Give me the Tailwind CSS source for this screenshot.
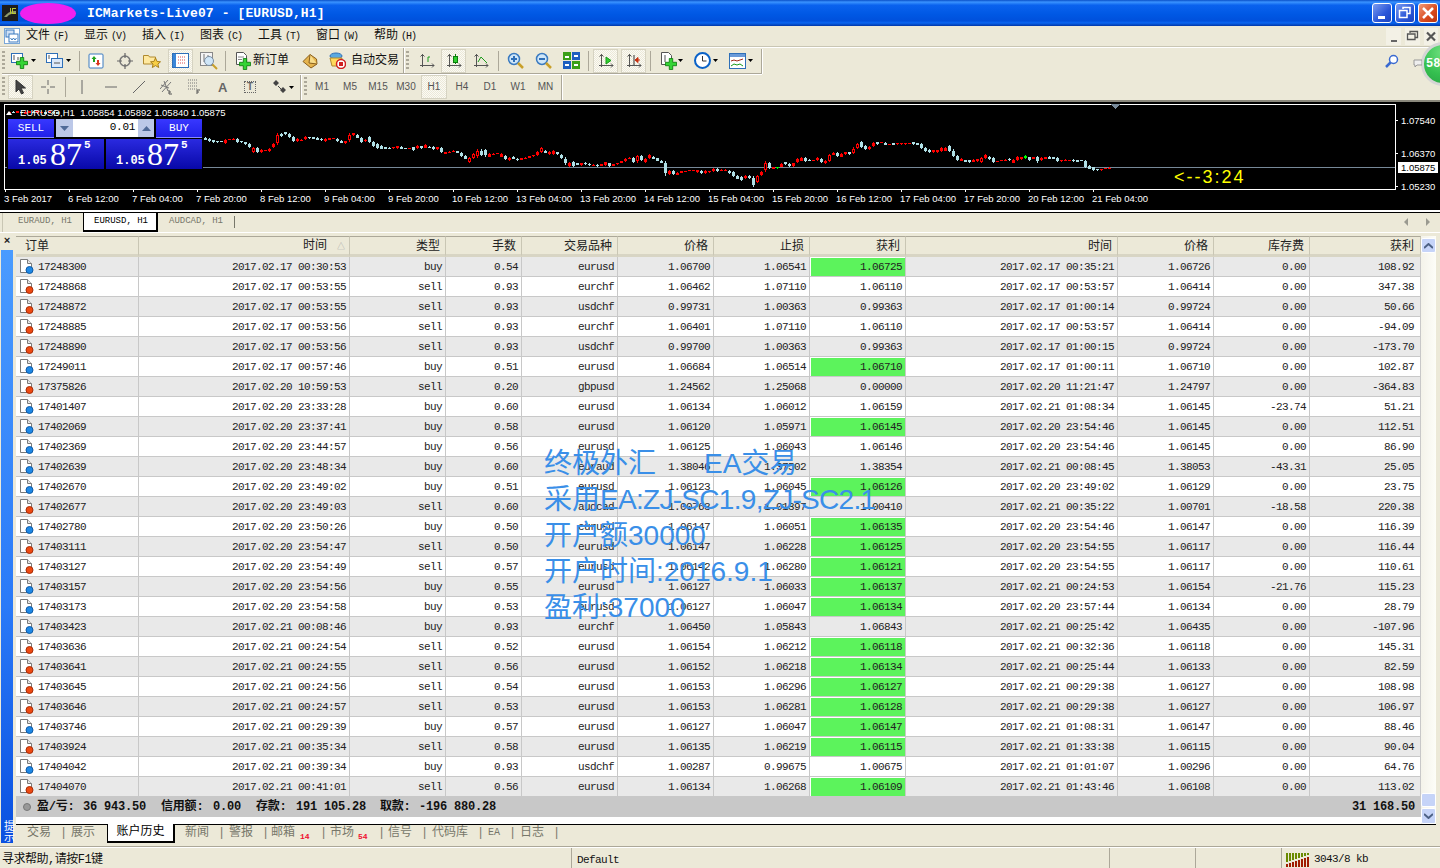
<!DOCTYPE html>
<html><head><meta charset="utf-8"><title>MT4</title>
<script src="https://cdn.jsdelivr.net/npm/@tailwindcss/browser@4"></script></head>
<body class="m-0 overflow-hidden">
<svg width="0" height="0" class="absolute"><defs>
<symbol id="b" viewBox="0 0 15 16"><path d="M1.5 1.5h7l4 4v9h-11z" fill="#fff" stroke="#7a7a7a"/><path d="M8.5 1.5v4h4" fill="#e8e8e8" stroke="#7a7a7a"/><circle cx="10.5" cy="12" r="3.5" fill="#1e88e5" stroke="#0d5aa7"/></symbol>
<symbol id="s" viewBox="0 0 15 16"><path d="M1.5 1.5h7l4 4v9h-11z" fill="#fff" stroke="#7a7a7a"/><path d="M8.5 1.5v4h4" fill="#e8e8e8" stroke="#7a7a7a"/><circle cx="10.5" cy="12" r="3.5" fill="#ee4a12" stroke="#a82c06"/></symbol>
<symbol id="plus" viewBox="0 0 14 14"><path d="M5 .5h4v4.500h4.500v4H9v4.500H5V9H.5V5H5z" fill="#35d435" stroke="#0d7d0d"/></symbol>
<symbol id="ax" viewBox="0 0 16 16"><path d="M3.500 1v13M1 12.500h14M1.500 3.500l2-2 2 2M13 10.500l2 2-2 2" fill="none" stroke="#555"/></symbol>
</defs></svg>

<div class="relative w-[1440px] h-[868px] overflow-hidden bg-[#ece9d8] text-black flex flex-col font-['Liberation_Mono','Noto_Sans_CJK_SC',monospace]">

<!-- title bar -->
<div class="h-[26px] shrink-0 flex items-center bg-[linear-gradient(180deg,#0a50c8_0%,#3a93ff_8%,#0a62ee_20%,#0058e4_55%,#0050dc_80%,#0a66f0_88%,#0036a8_100%)]">
  <svg width="16" height="16" viewBox="0 0 16 16" class="ml-[2px]"><rect width="16" height="16" fill="#1c1c1c"/><path d="M2 12q5-7 12-6v3q-6-1-9 3z" fill="#8f9a6a"/><path d="M8 3h1v6H8zM10 3h4v1h-3v4h3v1h-4z" fill="#b8c830"/></svg>
  <div class="ml-[2px] w-[56px] h-[21px] rounded-[50%] bg-[#f020ee]"></div>
  <div class="ml-[11px] text-white font-bold text-[13px] tracking-[0.12px] leading-none">ICMarkets-Live07 - [EURUSD,H1]</div>
  <div class="ml-auto flex gap-[3px] mr-[2px]">
    <div class="w-[20px] h-[20px] rounded-[3px] border border-white bg-[linear-gradient(135deg,#7c9cf0,#2a56d8_60%,#1c44c0)] flex items-end p-[3px]"><div class="ml-[2px] w-[7px] h-[3px] bg-white"></div></div>
    <div class="w-[20px] h-[20px] rounded-[3px] border border-white bg-[linear-gradient(135deg,#7c9cf0,#2a56d8_60%,#1c44c0)]"><svg width="18" height="18" viewBox="0 0 18 18"><path d="M7 5V3.500h7v6h-3M3.500 6.500h7.500v7H3.500z" fill="none" stroke="#fff" stroke-width="1.500"/></svg></div>
    <div class="w-[20px] h-[20px] rounded-[3px] border border-white bg-[linear-gradient(135deg,#f09a78,#d8481c_60%,#b83410)]"><svg width="18" height="18" viewBox="0 0 18 18"><path d="M4 4l10 10M14 4L4 14" stroke="#fff" stroke-width="2.500"/></svg></div>
  </div>
</div>

<!-- menu -->
<div class="h-[20px] shrink-0 flex items-center text-[12px] leading-none text-[#111] whitespace-nowrap">
  <div class="ml-[4px] w-[16px] h-[16px] bg-white border border-[#7aa7d8]"><svg width="14" height="14" viewBox="0 0 14 14"><rect x="1" y="1" width="8" height="7" fill="#cfe0f5" stroke="#3a7ac0"/><rect x="4" y="5" width="9" height="8" fill="#fff" stroke="#3a7ac0"/><path d="M5.500 9l1.500 2 1.500-2 1.500 2 1.500-2" fill="none" stroke="#3a7ac0"/></svg></div>
  <div class="ml-[6px] w-[58px]">文件<span class="ml-[3px] text-[10px] tracking-[-1px]">(F)</span></div><div class="w-[58px]">显示<span class="ml-[3px] text-[10px] tracking-[-1px]">(V)</span></div><div class="w-[58px]">插入<span class="ml-[3px] text-[10px] tracking-[-1px]">(I)</span></div><div class="w-[58px]">图表<span class="ml-[3px] text-[10px] tracking-[-1px]">(C)</span></div><div class="w-[58px]">工具<span class="ml-[3px] text-[10px] tracking-[-1px]">(T)</span></div><div class="w-[58px]">窗口<span class="ml-[3px] text-[10px] tracking-[-1px]">(W)</span></div><div class="w-[58px]">帮助<span class="ml-[3px] text-[10px] tracking-[-1px]">(H)</span></div>
  <div class="ml-auto flex gap-[4px] mr-[2px] text-[#555]">
    <div class="w-[15px] h-[17px] bg-[#f3f1e6] flex items-end justify-center pb-[3px]"><div class="w-[6px] h-[2px] bg-[#666]"></div></div>
    <div class="w-[15px] h-[17px] bg-[#f3f1e6]"><svg width="15" height="17" viewBox="0 0 15 17"><path d="M5 5V3.500h7.500v6H10M2.500 6h7.500v5.500H2.500z" fill="none" stroke="#555" stroke-width="1.300"/></svg></div>
    <div class="w-[14px] h-[17px] bg-[#f3f1e6]"><svg width="14" height="17" viewBox="0 0 14 17"><path d="M3 4.500l8 8M11 4.500l-8 8" stroke="#555" stroke-width="2.200"/></svg></div>
  </div>
</div>
<div class="h-[2px] shrink-0 bg-[#c9c6b4] border-b border-white"></div>

<!-- toolbar 1 -->
<div class="h-[26px] shrink-0 relative flex items-center pl-[2px]">
  <div class="flex items-center h-[25px] w-[760px] border-r border-b border-r-[#aca899] border-b-[#aca899] shadow-[0_1px_0_#fff,1px_0_0_#fff]">
    <div class="w-[3px] h-[20px] bg-[repeating-linear-gradient(180deg,#aca899_0_2px,#ece9d8_2px_4px)]"></div>
    <svg class="ml-[6px]" width="17" height="17" viewBox="0 0 17 17"><rect x=".5" y="1.500" width="11" height="9" fill="#fff" stroke="#2e6fb8"/><path d="M3 3v5M7 5v3" stroke="#555"/><use href="#plus" x="5" y="5" width="12" height="12"/></svg>
    <svg class="ml-[3px]" width="5" height="3" viewBox="0 0 5 3"><path d="M0 0h5L2.500 3z" fill="#000"/></svg>
    <svg class="ml-[10px]" width="17" height="17" viewBox="0 0 17 17"><rect x=".5" y="1.500" width="11" height="9" fill="#fff" stroke="#2e6fb8"/><rect x="5.500" y="6.500" width="11" height="9" fill="#dbe9fa" stroke="#2e6fb8"/><path d="M3 3v4M8 11h6" stroke="#555"/></svg>
    <svg class="ml-[3px]" width="5" height="3" viewBox="0 0 5 3"><path d="M0 0h5L2.500 3z" fill="#000"/></svg>
    <div class="ml-[8px] w-px h-[20px] bg-[#aca899]"></div>
    <svg class="ml-[8px]" width="16" height="16" viewBox="0 0 16 16"><rect x="1" y="1" width="14" height="14" rx="1" fill="#fff" stroke="#3a7ac0"/><path d="M6 3L3.500 6H5v3h2V6h1.500z" fill="#1fa31f"/><path d="M10 13l2.500-3H11V7H9v3H7.500z" fill="#d9381e"/></svg>
    <svg class="ml-[13px]" width="16" height="16" viewBox="0 0 16 16"><circle cx="8" cy="8" r="5" fill="none" stroke="#777" stroke-width="1.500"/><path d="M8 0v5M8 11v5M0 8h5M11 8h5" stroke="#666" stroke-width="1.200"/></svg>
    <svg class="ml-[10px]" width="18" height="17" viewBox="0 0 18 17"><path d="M.5 3.500h5l1 1.500h6v7h-12z" fill="#ffe9a0" stroke="#b08a30"/><path d="M12.500 6l1.600 3.500 3.400.3-2.600 2.300.8 3.400-3.200-1.900-3.200 1.900.8-3.400-2.600-2.300 3.400-.3z" fill="#f7cf45" stroke="#a87f1a"/></svg>
    <div class="ml-[7px] w-[25px] h-[24px] bg-[repeating-conic-gradient(#fbfaf5_0_25%,#ece9d8_0_50%)] bg-[length:2px_2px] border border-[#d6d3c2] flex items-center justify-center"><svg width="17" height="17" viewBox="0 0 17 17"><rect x=".5" y="1.500" width="16" height="14" fill="#fff" stroke="#2e6fb8"/><rect x="1" y="2" width="3" height="13" fill="#3a86d8"/><path d="M6 5h8M6 8h8M6 11h8" stroke="#d95050" stroke-dasharray="1 1"/></svg></div>
    <svg class="ml-[7px]" width="18" height="18" viewBox="0 0 18 18"><rect x=".5" y=".5" width="12" height="13" fill="#f4f4f4" stroke="#888"/><path d="M4 2v8M8 3v6" stroke="#777"/><circle cx="9" cy="9" r="4.500" fill="#cfe6f8" stroke="#7a8da0"/><path d="M12.500 12.500l4.500 4.500" stroke="#c9a02a" stroke-width="2"/></svg>
    <div class="ml-[7px] w-px h-[20px] bg-[#aca899]"></div>
    <svg class="ml-[9px]" width="16" height="18" viewBox="0 0 16 18"><path d="M1.500.5h7l3 3v9h-10z" fill="#fff" stroke="#555"/><path d="M3 5h6M3 7.500h4" stroke="#888"/><use href="#plus" x="4" y="6" width="12" height="12"/></svg>
    <div class="ml-[2px] w-[36px] text-[12px] leading-none text-[#111] whitespace-nowrap">新订单</div>
    <svg class="ml-[13px]" width="16" height="16" viewBox="0 0 16 16"><path d="M1 8.500L8 1.500 14.500 6l.5 5-6 4z" fill="#e5b44e" stroke="#8a5f1c"/><path d="M8 1.500L7 10l8 1" fill="#f7dc8a" stroke="#8a5f1c"/></svg>
    <svg class="ml-[11px]" width="17" height="17" viewBox="0 0 17 17"><ellipse cx="7" cy="4" rx="6" ry="3" fill="#5aa9e0" stroke="#2e6fb8"/><path d="M1 6h12l-1 8H3z" fill="#ffd95c" stroke="#b08a30"/><circle cx="12" cy="12" r="4.500" fill="#fff" stroke="#d02020" stroke-width="1.500"/><rect x="10" y="10" width="4" height="4" fill="#d02020"/></svg>
    <div class="ml-[5px] w-[48px] text-[12px] leading-none text-[#111] whitespace-nowrap">自动交易</div>
    <div class="ml-[4px] w-[2px] h-[25px] bg-[#aca899] border-r border-white"></div>
    <div class="ml-px w-[3px] h-[20px] bg-[repeating-linear-gradient(180deg,#aca899_0_2px,#ece9d8_2px_4px)]"></div>
    <svg class="ml-[10px]" width="16" height="16" viewBox="0 0 16 16"><use href="#ax" width="16" height="16"/><path d="M9 9V4h2" fill="none" stroke="#1a9a1a"/></svg>
    <div class="ml-[6px] w-[25px] h-[24px] bg-[repeating-conic-gradient(#fbfaf5_0_25%,#ece9d8_0_50%)] bg-[length:2px_2px] border border-[#d6d3c2] flex items-center justify-center"><svg width="16" height="16" viewBox="0 0 16 16"><use href="#ax" width="16" height="16"/><rect x="7.500" y="3.500" width="4" height="6" fill="#2fcf2f" stroke="#0d7d0d"/><path d="M9.500 1v2.500M9.500 9.500V11" stroke="#0d7d0d"/></svg></div>
    <svg class="ml-[7px]" width="16" height="16" viewBox="0 0 16 16"><use href="#ax" width="16" height="16"/><path d="M5 9l3-5 3 3 3 3" fill="none" stroke="#1a9a1a"/></svg>
    <div class="ml-[9px] w-px h-[20px] bg-[#aca899]"></div>
    <svg class="ml-[8px]" width="17" height="17" viewBox="0 0 17 17"><circle cx="7" cy="7" r="5.500" fill="#cfe6f8" stroke="#3a7ac0" stroke-width="1.500"/><path d="M4 7h6M7 4v6" stroke="#2e6fb8" stroke-width="2"/><path d="M11 11l5 5" stroke="#c9a02a" stroke-width="2.500"/></svg>
    <svg class="ml-[11px]" width="17" height="17" viewBox="0 0 17 17"><circle cx="7" cy="7" r="5.500" fill="#cfe6f8" stroke="#3a7ac0" stroke-width="1.500"/><path d="M4 7h6" stroke="#2e6fb8" stroke-width="2"/><path d="M11 11l5 5" stroke="#c9a02a" stroke-width="2.500"/></svg>
    <svg class="ml-[11px]" width="17" height="17" viewBox="0 0 17 17"><rect width="8" height="8" fill="#3aa018"/><rect x="9" width="8" height="8" fill="#1e5fc0"/><rect y="9" width="8" height="8" fill="#1e5fc0"/><rect x="9" y="9" width="8" height="8" fill="#3aa018"/><path d="M2 5h4M11 4h4M2 13h4M11 13h4" stroke="#fff" stroke-width="2"/></svg>
    <div class="ml-[8px] w-px h-[20px] bg-[#aca899]"></div>
    <div class="ml-[4px] w-[25px] h-[24px] bg-[repeating-conic-gradient(#fbfaf5_0_25%,#ece9d8_0_50%)] bg-[length:2px_2px] border border-[#d6d3c2] flex items-center justify-center"><svg width="16" height="16" viewBox="0 0 16 16"><use href="#ax" width="16" height="16"/><path d="M8 4l5 3.500-5 3.500z" fill="#2fcf2f" stroke="#1a9a1a"/></svg></div>
    <div class="ml-[3px] w-[25px] h-[24px] bg-[repeating-conic-gradient(#fbfaf5_0_25%,#ece9d8_0_50%)] bg-[length:2px_2px] border border-[#d6d3c2] flex items-center justify-center"><svg width="16" height="16" viewBox="0 0 16 16"><use href="#ax" width="16" height="16"/><path d="M8 2v10" stroke="#333"/><path d="M9 7h5M9 7l3-2.500v5z" fill="#c83010" stroke="#c83010"/></svg></div>
    <div class="ml-[4px] w-px h-[20px] bg-[#aca899]"></div>
    <svg class="ml-[9px]" width="17" height="18" viewBox="0 0 17 18"><path d="M1.500.5h7l3 3v9h-10z" fill="#fff" stroke="#555"/><path d="M5 3v7" stroke="#555"/><use href="#plus" x="5" y="6" width="12" height="12"/></svg>
    <svg class="ml-px" width="5" height="3" viewBox="0 0 5 3"><path d="M0 0h5L2.500 3z" fill="#000"/></svg>
    <svg class="ml-[11px]" width="17" height="17" viewBox="0 0 17 17"><circle cx="8.500" cy="8.500" r="7.500" fill="#fff" stroke="#0a62c8" stroke-width="2"/><path d="M8.500 4v5h4" fill="none" stroke="#333"/></svg>
    <svg class="ml-[2px]" width="5" height="3" viewBox="0 0 5 3"><path d="M0 0h5L2.500 3z" fill="#000"/></svg>
    <svg class="ml-[11px]" width="17" height="16" viewBox="0 0 17 16"><rect x=".5" y=".5" width="16" height="15" fill="#fff" stroke="#2e6fb8"/><rect x="1" y="1" width="15" height="3" fill="#6a9ad8"/><path d="M2 8l3-1 3 1 3-1 3-1" fill="none" stroke="#a02818"/><path d="M2 13l3-2 3 1 3-1 3 2" fill="none" stroke="#1a9a1a"/></svg>
    <svg class="ml-[2px]" width="5" height="3" viewBox="0 0 5 3"><path d="M0 0h5L2.500 3z" fill="#000"/></svg>
  </div>
  <svg class="ml-auto mr-[41px]" width="14" height="14" viewBox="0 0 14 14"><circle cx="8.500" cy="5.500" r="4" fill="#fff" stroke="#3a6ad0" stroke-width="1.500"/><path d="M5.500 8.500L1 13" stroke="#3a6ad0" stroke-width="2.500"/></svg>
</div>

<!-- toolbar 2 -->
<div class="h-[26px] shrink-0 flex items-center pl-[2px]">
  <div class="flex items-center h-[26px] w-[560px] border-r border-[#aca899] shadow-[1px_0_0_#fff]">
    <div class="w-[3px] h-[20px] bg-[repeating-linear-gradient(180deg,#aca899_0_2px,#ece9d8_2px_4px)]"></div>
    <div class="ml-[3px] w-[25px] h-[24px] bg-[repeating-conic-gradient(#fbfaf5_0_25%,#ece9d8_0_50%)] bg-[length:2px_2px] border border-[#d6d3c2] flex items-center justify-center"><svg width="12" height="16" viewBox="0 0 12 16"><path d="M1 1v12l3-3 2.500 5 2-1L6 9h4.500z" fill="#444" stroke="#333"/></svg></div>
    <svg class="ml-[8px]" width="14" height="14" viewBox="0 0 14 14"><path d="M7 0v5M7 9v5M0 7h5M9 7h5" stroke="#666"/></svg>
    <div class="ml-[10px] w-px h-[20px] bg-[#aca899]"></div>
    <svg class="ml-[10px]" width="12" height="14" viewBox="0 0 12 14"><path d="M6 0v14" stroke="#666"/></svg>
    <svg class="ml-[17px]" width="12" height="14" viewBox="0 0 12 14"><path d="M0 7h12" stroke="#666"/></svg>
    <svg class="ml-[16px]" width="12" height="14" viewBox="0 0 12 14"><path d="M0 13L12 1" stroke="#666"/></svg>
    <svg class="ml-[15px]" width="13" height="16" viewBox="0 0 13 16"><path d="M0 10L8 1M2 13l9-10M4 2l4 10M1 6l8 3" fill="none" stroke="#777"/><path d="M9 11v4h3M9 13h2" fill="none" stroke="#555"/></svg>
    <svg class="ml-[15px]" width="13" height="16" viewBox="0 0 13 16"><path d="M0 1h10M0 4h10M0 7h10M0 10h10" stroke="#777" stroke-dasharray="1 1"/><path d="M9 15v-4h3M9 13h2" fill="none" stroke="#555"/></svg>
    <div class="ml-[17px] w-[10px] text-[13px] leading-none text-[#666] font-['Liberation_Sans'] font-bold">A</div>
    <div class="ml-[16px] w-[12px] h-[12px] border border-dotted border-[#666] text-[10px] leading-[10px] text-center text-[#666] font-['Liberation_Sans'] font-bold">T</div>
    <svg class="ml-[16px]" width="16" height="14" viewBox="0 0 16 14"><path d="M4 0L7 3 4 6 1 3zM11 7l3 3-3 3-3-3z" fill="#444"/><path d="M6 6l3 3" stroke="#444"/></svg>
    <svg class="ml-px" width="5" height="3" viewBox="0 0 5 3"><path d="M0 0h5L2.500 3z" fill="#000"/></svg>
    <div class="ml-[6px] w-[2px] h-[26px] bg-[#aca899] border-r border-white"></div>
    <div class="ml-[2px] w-[3px] h-[20px] bg-[repeating-linear-gradient(180deg,#aca899_0_2px,#ece9d8_2px_4px)]"></div>
    <div class="ml-px flex font-['Liberation_Sans'] text-[10px] text-[#555] text-center leading-[24px]">
      <div class="w-[28px]">M1</div><div class="w-[28px]">M5</div><div class="w-[28px]">M15</div><div class="w-[28px]">M30</div><div class="ml-px w-[26px] mr-px h-[24px] bg-[repeating-conic-gradient(#fbfaf5_0_25%,#ece9d8_0_50%)] bg-[length:2px_2px] border border-[#d6d3c2] leading-[22px]">H1</div><div class="w-[28px]">H4</div><div class="w-[28px]">D1</div><div class="w-[28px]">W1</div><div class="w-[27px]">MN</div>
    </div>
  </div>
</div>

<!-- chart -->
<div class="relative h-[110px] shrink-0 bg-black border-t-2 border-[#8a887c]">
  <svg id="chart" class="absolute left-0 top-[-2px]" width="1440" height="110" viewBox="0 100 1440 110" shape-rendering="crispEdges" font-family="'Liberation Sans',sans-serif" font-size="9.500" fill="#fff">
    <rect x="4.500" y="104.500" width="1391" height="85" fill="none" stroke="#fff"/>
    <path d="M1395 120.500h3M1395 153.500h3M1395 186.500h3" stroke="#fff"/>
    <path d="M5 167.500h2M203 167.500H1395" stroke="#768898"/>
    <path d="M1110 104h11l-5.500 5z" fill="#768898"/>
    <g id="cand"></g>
    <path d="M5 189v3M69 189v3M133 189v3M197 189v3M261 189v3M325 189v3M389 189v3M453 189v3M517 189v3M581 189v3M645 189v3M709 189v3M773 189v3M837 189v3M901 189v3M965 189v3M1029 189v3M1093 189v3" stroke="#fff"/>
    <g shape-rendering="auto">
    <path d="M6 115l3-4 3 4z" fill="#fff"/>
    <text x="20" y="116">EURUSD,H1&#160; 1.05854 1.05892 1.05840 1.05875</text>
    <text x="4" y="202">3 Feb 2017</text><text x="68" y="202">6 Feb 12:00</text><text x="132" y="202">7 Feb 04:00</text><text x="196" y="202">7 Feb 20:00</text><text x="260" y="202">8 Feb 12:00</text><text x="324" y="202">9 Feb 04:00</text><text x="388" y="202">9 Feb 20:00</text><text x="452" y="202">10 Feb 12:00</text><text x="516" y="202">13 Feb 04:00</text><text x="580" y="202">13 Feb 20:00</text><text x="644" y="202">14 Feb 12:00</text><text x="708" y="202">15 Feb 04:00</text><text x="772" y="202">15 Feb 20:00</text><text x="836" y="202">16 Feb 12:00</text><text x="900" y="202">17 Feb 04:00</text><text x="964" y="202">17 Feb 20:00</text><text x="1028" y="202">20 Feb 12:00</text><text x="1092" y="202">21 Feb 04:00</text>
    <g font-size="9.500"><text x="1401" y="124">1.07540</text><text x="1401" y="157">1.06370</text><text x="1401" y="190">1.05230</text></g>
    <rect x="1398" y="162" width="40" height="11" fill="#fff"/><text x="1401" y="171" fill="#000">1.05875</text>
    <text x="1174" y="183" font-size="18" letter-spacing="2" fill="#ffff00">&lt;--3:24</text>
    </g>
  </svg>
  <!-- one click trading panel -->
  <div class="absolute left-[8px] top-[17px] w-[194px] h-[50px] flex flex-col gap-px">
    <div class="flex h-[19px] text-[11px] text-white text-center leading-[19px]">
      <div class="w-[46px] bg-[linear-gradient(180deg,#3838ff,#2020e8)] border-b border-[#8a8aff]">SELL</div>
      <div class="ml-[2px] w-[50px] flex-1 flex h-[18px]">
        <div class="w-[17px] bg-[#bcc8e8] flex items-center justify-center"><svg width="9" height="5" viewBox="0 0 9 5"><path d="M0 0h9L4.500 5z" fill="#506a98"/></svg></div>
        <div class="w-[65px] bg-white text-black text-right pr-[3px] leading-[17px] tracking-[-0.3px]">0.01</div>
        <div class="w-[16px] bg-[#bcc8e8] flex items-center justify-center"><svg width="9" height="5" viewBox="0 0 9 5"><path d="M0 5h9L4.500 0z" fill="#506a98"/></svg></div>
      </div>
      <div class="ml-[2px] w-[46px] bg-[linear-gradient(180deg,#3838ff,#2020e8)] border-b border-[#8a8aff]">BUY</div>
    </div>
    <div class="flex gap-[2px] h-[31px]">
      <div class="relative w-[96px] bg-[linear-gradient(180deg,#2a2ae0,#0808a8)] text-white">
        <span class="absolute left-[10px] bottom-[2px] text-[12px] font-bold leading-none">1.05</span>
        <span class="absolute left-[42px] top-0 text-[32px] leading-[31px] font-['Liberation_Serif']">87</span>
        <span class="absolute left-[76px] top-[1px] text-[11px] font-bold leading-none">5</span>
      </div>
      <div class="relative w-[96px] bg-[linear-gradient(180deg,#2a2ae0,#0808a8)] text-white">
        <span class="absolute left-[10px] bottom-[2px] text-[12px] font-bold leading-none">1.05</span>
        <span class="absolute left-[41px] top-0 text-[32px] leading-[31px] font-['Liberation_Serif']">87</span>
        <span class="absolute left-[75px] top-[1px] text-[11px] font-bold leading-none">5</span>
      </div>
    </div>
  </div>
</div>
<div class="h-[2px] shrink-0 bg-white"></div>

<!-- chart tabs -->
<div class="h-[20px] shrink-0 border-t border-black flex text-[9px] leading-[17px] text-[#77776a] border-b-0">
  <div class="ml-[2px] w-[81px] pl-[15px] bg-[#ece9d8] border-l border-[#c9c6b4] whitespace-nowrap">EURAUD, H1</div>
  <div class="w-[75px] h-[19px] pl-[10px] bg-white text-black border-l border-r-2 border-b-2 border-black whitespace-nowrap">EURUSD, H1</div>
  <div class="ml-[11px] w-[65px] whitespace-nowrap">AUDCAD, H1</div>
  <div class="mt-[3px] w-px h-[12px] bg-[#77776a]"></div>
  <svg class="ml-auto mr-[10px] mt-[5px]" width="26" height="8" viewBox="0 0 26 8"><path d="M4 0v8L0 4zM22 0v8l4-4z" fill="#9a9a90"/></svg>
</div>
<div class="h-[4px] shrink-0 border-t border-white"></div>

<!-- terminal -->
<div class="h-[607px] shrink-0 flex">
  <div class="w-[16px] shrink-0 flex flex-col items-start">
    <div class="h-[14px] w-[14px] text-center text-[11px] font-bold leading-[11px] text-[#222]">×</div>
    <div class="ml-px w-[12px] flex-1 bg-[linear-gradient(180deg,#4a9bff,#2a7af8_60%,#0a50e0)] flex flex-col justify-end items-center pb-[1px] text-white text-[11px] leading-none"><span class="[writing-mode:vertical-rl]">提示</span></div>
  </div>
  <div class="flex-1 flex flex-col">
    <div class="h-[588px] flex">
      <div class="w-[1405px] shrink-0 flex flex-col bg-white">
        <table class="table-fixed w-[1405px] border-separate border-spacing-0 text-[11px] tracking-[-0.6px] text-[#222] [&_th]:font-normal [&_th]:text-[12px] [&_th]:leading-[14px] [&_th]:tracking-normal [&_th]:h-[21px] [&_th]:p-0 [&_th]:pt-[2px] [&_th]:pr-[5px] [&_th]:text-right [&_th]:bg-[#ece9d8] [&_th]:border-t [&_th]:border-t-[#aca899] [&_th]:border-b-[3px] [&_th]:border-b-[#d8d5c4] [&_th]:[border-right:1px_solid_#c9c6b4] [&_td]:h-5 [&_td]:p-0 [&_td]:pt-px [&_td]:pr-[3px] [&_td]:text-right [&_td]:whitespace-nowrap [&_td]:overflow-hidden [&_td]:leading-[17px] [&_td]:border-b [&_td]:border-r [&_td]:border-[#c8c8c8] [&_td:first-child]:text-left [&_td:first-child]:pl-[3px] [&_td:last-child]:pr-[6px] [&_td>svg]:inline [&_td>svg]:align-[-4px] [&_td>svg]:mr-[4px] [&_tbody_tr:nth-child(odd)_td]:bg-[#e9e9e9]">
          <colgroup><col class="w-[123px]"><col class="w-[211px]"><col class="w-[96px]"><col class="w-[76px]"><col class="w-[96px]"><col class="w-[96px]"><col class="w-[96px]"><col class="w-[96px]"><col class="w-[212px]"><col class="w-[96px]"><col class="w-[96px]"><col class="w-[111px]"></colgroup>
          <thead><tr><th class="text-left! pl-[9px]!">订单</th><th class="pr-[4px]!">时间<span class="ml-[10px] text-[8px] text-[#aaa]">△</span></th><th>类型</th><th>手数</th><th>交易品种</th><th>价格</th><th>止损</th><th>获利</th><th>时间</th><th>价格</th><th>库存费</th><th class="pr-[6px]!">获利</th></tr></thead>
          <tbody>
<tr><td><svg width="15" height="16"><use href="#b"/></svg>17248300<td>2017.02.17 00:30:53<td>buy<td>0.54<td>eurusd<td>1.06700<td>1.06541<td class="bg-[#5cf35c]! shadow-[inset_1px_1px_0_#fff]">1.06725<td>2017.02.17 00:35:21<td>1.06726<td>0.00<td>108.92</tr>
<tr><td><svg width="15" height="16"><use href="#s"/></svg>17248868<td>2017.02.17 00:53:55<td>sell<td>0.93<td>eurchf<td>1.06462<td>1.07110<td>1.06110<td>2017.02.17 00:53:57<td>1.06414<td>0.00<td>347.38</tr>
<tr><td><svg width="15" height="16"><use href="#s"/></svg>17248872<td>2017.02.17 00:53:55<td>sell<td>0.93<td>usdchf<td>0.99731<td>1.00363<td>0.99363<td>2017.02.17 01:00:14<td>0.99724<td>0.00<td>50.66</tr>
<tr><td><svg width="15" height="16"><use href="#s"/></svg>17248885<td>2017.02.17 00:53:56<td>sell<td>0.93<td>eurchf<td>1.06401<td>1.07110<td>1.06110<td>2017.02.17 00:53:57<td>1.06414<td>0.00<td>-94.09</tr>
<tr><td><svg width="15" height="16"><use href="#s"/></svg>17248890<td>2017.02.17 00:53:56<td>sell<td>0.93<td>usdchf<td>0.99700<td>1.00363<td>0.99363<td>2017.02.17 01:00:15<td>0.99724<td>0.00<td>-173.70</tr>
<tr><td><svg width="15" height="16"><use href="#b"/></svg>17249011<td>2017.02.17 00:57:46<td>buy<td>0.51<td>eurusd<td>1.06684<td>1.06514<td class="bg-[#5cf35c]! shadow-[inset_1px_1px_0_#fff]">1.06710<td>2017.02.17 01:00:11<td>1.06710<td>0.00<td>102.87</tr>
<tr><td><svg width="15" height="16"><use href="#s"/></svg>17375826<td>2017.02.20 10:59:53<td>sell<td>0.20<td>gbpusd<td>1.24562<td>1.25068<td>0.00000<td>2017.02.20 11:21:47<td>1.24797<td>0.00<td>-364.83</tr>
<tr><td><svg width="15" height="16"><use href="#b"/></svg>17401407<td>2017.02.20 23:33:28<td>buy<td>0.60<td>eurusd<td>1.06134<td>1.06012<td>1.06159<td>2017.02.21 01:08:34<td>1.06145<td>-23.74<td>51.21</tr>
<tr><td><svg width="15" height="16"><use href="#b"/></svg>17402069<td>2017.02.20 23:37:41<td>buy<td>0.58<td>eurusd<td>1.06120<td>1.05971<td class="bg-[#5cf35c]! shadow-[inset_1px_1px_0_#fff]">1.06145<td>2017.02.20 23:54:46<td>1.06145<td>0.00<td>112.51</tr>
<tr><td><svg width="15" height="16"><use href="#b"/></svg>17402369<td>2017.02.20 23:44:57<td>buy<td>0.56<td>eurusd<td>1.06125<td>1.06043<td>1.06146<td>2017.02.20 23:54:46<td>1.06145<td>0.00<td>86.90</tr>
<tr><td><svg width="15" height="16"><use href="#b"/></svg>17402639<td>2017.02.20 23:48:34<td>buy<td>0.60<td>euraud<td>1.38046<td>1.37502<td>1.38354<td>2017.02.21 00:08:45<td>1.38053<td>-43.31<td>25.05</tr>
<tr><td><svg width="15" height="16"><use href="#b"/></svg>17402670<td>2017.02.20 23:49:02<td>buy<td>0.51<td>eurusd<td>1.06123<td>1.06045<td class="bg-[#5cf35c]! shadow-[inset_1px_1px_0_#fff]">1.06126<td>2017.02.20 23:49:02<td>1.06129<td>0.00<td>23.75</tr>
<tr><td><svg width="15" height="16"><use href="#s"/></svg>17402677<td>2017.02.20 23:49:03<td>sell<td>0.60<td>audcad<td>1.00763<td>1.01397<td>1.00410<td>2017.02.21 00:35:22<td>1.00701<td>-18.58<td>220.38</tr>
<tr><td><svg width="15" height="16"><use href="#b"/></svg>17402780<td>2017.02.20 23:50:26<td>buy<td>0.50<td>eurusd<td>1.06147<td>1.06051<td class="bg-[#5cf35c]! shadow-[inset_1px_1px_0_#fff]">1.06135<td>2017.02.20 23:54:46<td>1.06147<td>0.00<td>116.39</tr>
<tr><td><svg width="15" height="16"><use href="#s"/></svg>17403111<td>2017.02.20 23:54:47<td>sell<td>0.50<td>eurusd<td>1.06147<td>1.06228<td class="bg-[#5cf35c]! shadow-[inset_1px_1px_0_#fff]">1.06125<td>2017.02.20 23:54:55<td>1.06117<td>0.00<td>116.44</tr>
<tr><td><svg width="15" height="16"><use href="#s"/></svg>17403127<td>2017.02.20 23:54:49<td>sell<td>0.57<td>eurusd<td>1.06142<td>1.06280<td class="bg-[#5cf35c]! shadow-[inset_1px_1px_0_#fff]">1.06121<td>2017.02.20 23:54:55<td>1.06117<td>0.00<td>110.61</tr>
<tr><td><svg width="15" height="16"><use href="#b"/></svg>17403157<td>2017.02.20 23:54:56<td>buy<td>0.55<td>eurusd<td>1.06127<td>1.06033<td class="bg-[#5cf35c]! shadow-[inset_1px_1px_0_#fff]">1.06137<td>2017.02.21 00:24:53<td>1.06154<td>-21.76<td>115.23</tr>
<tr><td><svg width="15" height="16"><use href="#b"/></svg>17403173<td>2017.02.20 23:54:58<td>buy<td>0.53<td>eurusd<td>1.06127<td>1.06047<td class="bg-[#5cf35c]! shadow-[inset_1px_1px_0_#fff]">1.06134<td>2017.02.20 23:57:44<td>1.06134<td>0.00<td>28.79</tr>
<tr><td><svg width="15" height="16"><use href="#b"/></svg>17403423<td>2017.02.21 00:08:46<td>buy<td>0.93<td>eurchf<td>1.06450<td>1.05843<td>1.06843<td>2017.02.21 00:25:42<td>1.06435<td>0.00<td>-107.96</tr>
<tr><td><svg width="15" height="16"><use href="#s"/></svg>17403636<td>2017.02.21 00:24:54<td>sell<td>0.52<td>eurusd<td>1.06154<td>1.06212<td class="bg-[#5cf35c]! shadow-[inset_1px_1px_0_#fff]">1.06118<td>2017.02.21 00:32:36<td>1.06118<td>0.00<td>145.31</tr>
<tr><td><svg width="15" height="16"><use href="#s"/></svg>17403641<td>2017.02.21 00:24:55<td>sell<td>0.56<td>eurusd<td>1.06152<td>1.06218<td class="bg-[#5cf35c]! shadow-[inset_1px_1px_0_#fff]">1.06134<td>2017.02.21 00:25:44<td>1.06133<td>0.00<td>82.59</tr>
<tr><td><svg width="15" height="16"><use href="#s"/></svg>17403645<td>2017.02.21 00:24:56<td>sell<td>0.54<td>eurusd<td>1.06153<td>1.06296<td class="bg-[#5cf35c]! shadow-[inset_1px_1px_0_#fff]">1.06127<td>2017.02.21 00:29:38<td>1.06127<td>0.00<td>108.98</tr>
<tr><td><svg width="15" height="16"><use href="#s"/></svg>17403646<td>2017.02.21 00:24:57<td>sell<td>0.53<td>eurusd<td>1.06153<td>1.06281<td class="bg-[#5cf35c]! shadow-[inset_1px_1px_0_#fff]">1.06128<td>2017.02.21 00:29:38<td>1.06127<td>0.00<td>106.97</tr>
<tr><td><svg width="15" height="16"><use href="#b"/></svg>17403746<td>2017.02.21 00:29:39<td>buy<td>0.57<td>eurusd<td>1.06127<td>1.06047<td class="bg-[#5cf35c]! shadow-[inset_1px_1px_0_#fff]">1.06147<td>2017.02.21 01:08:31<td>1.06147<td>0.00<td>88.46</tr>
<tr><td><svg width="15" height="16"><use href="#s"/></svg>17403924<td>2017.02.21 00:35:34<td>sell<td>0.58<td>eurusd<td>1.06135<td>1.06219<td class="bg-[#5cf35c]! shadow-[inset_1px_1px_0_#fff]">1.06115<td>2017.02.21 01:33:38<td>1.06115<td>0.00<td>90.04</tr>
<tr><td><svg width="15" height="16"><use href="#b"/></svg>17404042<td>2017.02.21 00:39:34<td>buy<td>0.93<td>usdchf<td>1.00287<td>0.99675<td>1.00675<td>2017.02.21 01:01:07<td>1.00296<td>0.00<td>64.76</tr>
<tr><td><svg width="15" height="16"><use href="#s"/></svg>17404070<td>2017.02.21 00:41:01<td>sell<td>0.56<td>eurusd<td>1.06134<td>1.06268<td class="bg-[#5cf35c]! shadow-[inset_1px_1px_0_#fff]">1.06109<td>2017.02.21 01:43:46<td>1.06108<td>0.00<td>113.02</tr>
          </tbody>
        </table>
        <div class="h-[20px] shrink-0 bg-[#c8c8c8] flex items-center text-[12px] font-bold tracking-[-0.2px] whitespace-pre text-[#111]">
          <div class="ml-[7px] w-[8px] h-[8px] rounded-full bg-[#999] border border-[#777]"></div>
          <span class="ml-[6px] w-[46px]">盈/亏:</span><span class="w-[78px]">36 943.50</span><span class="w-[52px]">信用额:</span><span class="w-[43px]">0.00</span><span class="w-[40px]">存款:</span><span class="w-[84px]">191 105.28</span><span class="w-[39px]">取款:</span><span>-196 880.28</span>
          <span class="ml-auto mr-[6px]">31 168.50</span>
        </div>
      </div>
      <div class="w-[15px] shrink-0 flex flex-col bg-[linear-gradient(90deg,#f4f3ea,#fdfdf8)]">
        <div class="mt-[2px] h-[15px] bg-[#c6d4f8] border border-white rounded-[2px] flex items-center justify-center"><svg width="9" height="6" viewBox="0 0 9 6"><path d="M0 5l4.500-4L9 5" fill="none" stroke="#4d6185" stroke-width="2"/></svg></div>
        <div class="mt-auto h-[14px] bg-[#c6d4f8] border border-white rounded-[2px]"></div>
        <div class="mt-px h-[16px] bg-[#c6d4f8] border border-white rounded-[2px] flex items-center justify-center"><svg width="9" height="6" viewBox="0 0 9 6"><path d="M0 1l4.500 4L9 1" fill="none" stroke="#4d6185" stroke-width="2"/></svg></div>
      </div>
    </div>
    <div class="h-[19px] shrink-0 w-[1420px] border-t border-black flex text-[12px] leading-[16px] text-[#77776a] relative">
      <div class="ml-[11px] w-[33px]">交易</div><div class="w-[11px]">|</div>
      <div class="w-[36px]">展示</div>
      <div class="w-[68px] h-[19px] text-center bg-white text-black border-l border-r-2 border-b-2 border-black mt-[-1px] leading-[17px]">账户历史</div>
      <div class="ml-[10px] w-[33px]">新闻</div><div class="w-[11px]">|</div>
      <div class="w-[33px]">警报</div><div class="w-[9px]">|</div>
      <div class="w-[28px]">邮箱</div><div class="w-[21px] text-[8px] font-bold text-[#f01030] pt-[4px] pl-[1px]">14</div><div class="w-[10px]">|</div>
      <div class="w-[28px]">市场</div><div class="w-[20px] text-[8px] font-bold text-[#f01030] pt-[4px]">54</div><div class="w-[10px]">|</div>
      <div class="w-[33px]">信号</div><div class="w-[11px]">|</div>
      <div class="w-[45px]">代码库</div><div class="w-[11px]">|</div>
      <div class="w-[21px] text-[10px]">EA</div><div class="w-[11px]">|</div>
      <div class="w-[33px]">日志</div><div>|</div>
    </div>
  </div>
</div>

<div class="h-[3px] shrink-0"></div>
<div class="h-[2px] shrink-0 bg-[#aca899] border-b border-white"></div>

<!-- status -->
<div class="h-[20px] shrink-0 flex items-center text-[11px] text-[#111] leading-none">
  <div class="w-[571px] pl-[2px] whitespace-nowrap h-full flex items-center pt-[3px]"><span class="text-[12px] tracking-[-0.5px]">寻求帮助,请按F1键</span></div>
  <div class="w-[538px] pl-[5px] border-l border-[#aca899] h-full flex items-center tracking-[-0.6px] pt-[4px]">Default</div>
  <div class="w-[86px] border-l border-[#aca899] h-full"></div>
  <div class="w-[86px] border-l border-[#aca899] h-full"></div>
  <div class="flex-1 border-l border-[#aca899] h-full flex items-center pl-[4px] pt-[3px]">
    <svg width="24" height="14" viewBox="0 0 24 14" shape-rendering="crispEdges"><path d="M1 0v9M4 0v8M7 0v7M10 0v6M13 0v5M16 0v4M19 0v3M22 0v2" stroke="#6a8a00" stroke-width="2"/><path d="M1 11v3M4 10v4M7 9v5M10 8v6M13 7v7M16 6v8M19 5v9M22 4v10" stroke="#a01c00" stroke-width="2"/></svg>
    <span class="ml-[4px] tracking-[-0.6px]">3043/8 kb</span>
  </div>
</div>

<!-- overlays -->
<div class="absolute left-[1421px] top-[42px] w-[44px] h-[44px] rounded-full bg-[radial-gradient(circle_at_50%_20%,#6fe07f,#35c050_60%,#2aa545)] border-[3px] border-[#d5d5d5] text-white font-bold text-[12px] leading-[38px] pl-[2px]">58</div>
<svg class="absolute left-[1413px] top-[59px]" width="9" height="9" viewBox="0 0 9 9"><path d="M1 1h8v5H4L2 8V6H1z" fill="#eee" stroke="#999"/></svg>
<div class="absolute left-[544px] top-[446px] text-[#3a8fe8] text-[28px] leading-[36px] whitespace-nowrap font-['Liberation_Sans','Noto_Sans_CJK_SC',sans-serif]">
  <div>终极外汇<span class="ml-[48px]">EA交易</span></div>
  <div>采用<span class="tracking-[-0.7px]">EA:ZJ-SC1.9,ZJ-SC2.1</span></div>
  <div>开户额30000</div>
  <div>开户时间:2016.9.1</div>
  <div>盈利:37000</div>
</div>
</div>

<script>
var seg=[[205,"l112-120 l115-125 l120-128 l122-128 l124-126 r118-132 r116-120 r115-118 l115-130 l122-128 l125-135 l130-145 r140-158 l140-158 r148-158 r150-153 r145-155 r130-145 r100-135 l100-110 l95-105 l98-115 l108-125 r115-125 r118-121 r108-120 l110-116 l110-118 l112-120 l115-122 r115-125 r113-120 r114-118 l115-125 l120-130 r122-132 r100-125 r98-108 l102-115 l110-128 r118-125 l108-130 l122-140 l128-148 l135-148 l140-148 l142-145 r140-146 r138-146"],
[401,"l138-148 l144-148 r143-146 l140-152 r136-146 l138-146 r132-145 l139-142 l138-150 r140-150 l140-160 r155-162 r154-157 r151-154 l152-160 l156-170 l165-178 r172-188 r160-178 r148-174 l148-168 l146-170 r160-172 r160-166 r159-162 r160-172 l164-180 r172-182 l168-178 l175-182 r174-180 r172-178 r168-174 r164-170 r154-168 r142-158 l150-160 r153-165 r150-165 l155-165 l162-176 l172-194 r185-200 l184-200 l188-196 r188-197 l186-195 l190-197 r193-196 l193-200 r192-198 r185-197 l188-200 r192-198 r188-194 r182-190 r174-185 r172-178 l172-190 r164-188 l165-182 r175-188 r162-176 l168-178 l173-184 l180-190 l182-228 r210-226 l210-224 r216-226 r213-220 r212-216 r210-213 r210-213 r210-218 l210-222 r210-222 r212-218 r205-215 l204-215 r208-214 r208-214 l210-222 l212-232 l226-238 l228-242 r226-236 l226-236 l228-260 r224-250 r212-228 r184-215 l186-208 r200-208 g200-206 r190-202 l186-194 l190-200 r188-200 r174-190"],
[801,"r172-184 l172-185 l178-182 r179-182 r172-182 l174-188 r180-192 r162-186 r156-166 l156-172 r160-172 r155-165 l155-165 r142-162 r128-146 l122-144 l136-150 r138-150 r126-142 l126-134 r126-130 l126-136 r131-134 l128-136 r128-134 r128-134 r128-134 r129-132 l126-134 l128-136 l130-146 l142-156 l146-160 r150-158 r150-158 r142-155 r142-154 l134-156 l148-172 l165-182 r174-184 l180-186 l180-188 r178-186 r176-186 r172-188 r162-178 l168-180 l172-190 r182-186 r180-184 r178-182 l175-182 r178-190 r168-182 r170-180 g165-176 l170-182 r170-178 l168-188 r170-184 r170-178 l168-178 l170-178 l172-186 r180-185 r178-184 r180-184 l178-185 l180-186 l180-184 l180-204 l196-208 l200-212 l207-212 r207-212 r204-208 r202-206"],
[9,"r36-40 l34-40 r32-40 l35-40 r34-42 r33-40 l34-40 r33-41 r34-40 l35-42 r33-40 l34-41 l35-42"]];
var col={l:"#b0e0e6",r:"#ff0000",g:"#00ff00"},o="";
seg.forEach(function(s){var x=s[0];s[1].split(" ").forEach(function(c){var t=c[0],p=c.slice(1).split("-"),a=100+p[0]/3,b=100+p[1]/3,h=b-a,k=col[t];
 var top=Math.round(a+h*.18),bot=Math.round(b-h*.18);if(bot<=top)bot=top+1;
 o+='<path d="M'+(x+.5)+' '+Math.round(a)+'V'+Math.round(b)+'" stroke="'+k+'"/>';
 if(t=="r"&&bot-top>3)o+='<rect x="'+(x-.5)+'" y="'+(top+.5)+'" width="2" height="'+(bot-top-1)+'" fill="#000" stroke="'+k+'"/>';
 else o+='<rect x="'+(x-1)+'" y="'+top+'" width="3" height="'+(bot-top)+'" fill="'+k+'"/>';
 x+=4;});});
document.getElementById("cand").innerHTML=o;
</script>
</body></html>
